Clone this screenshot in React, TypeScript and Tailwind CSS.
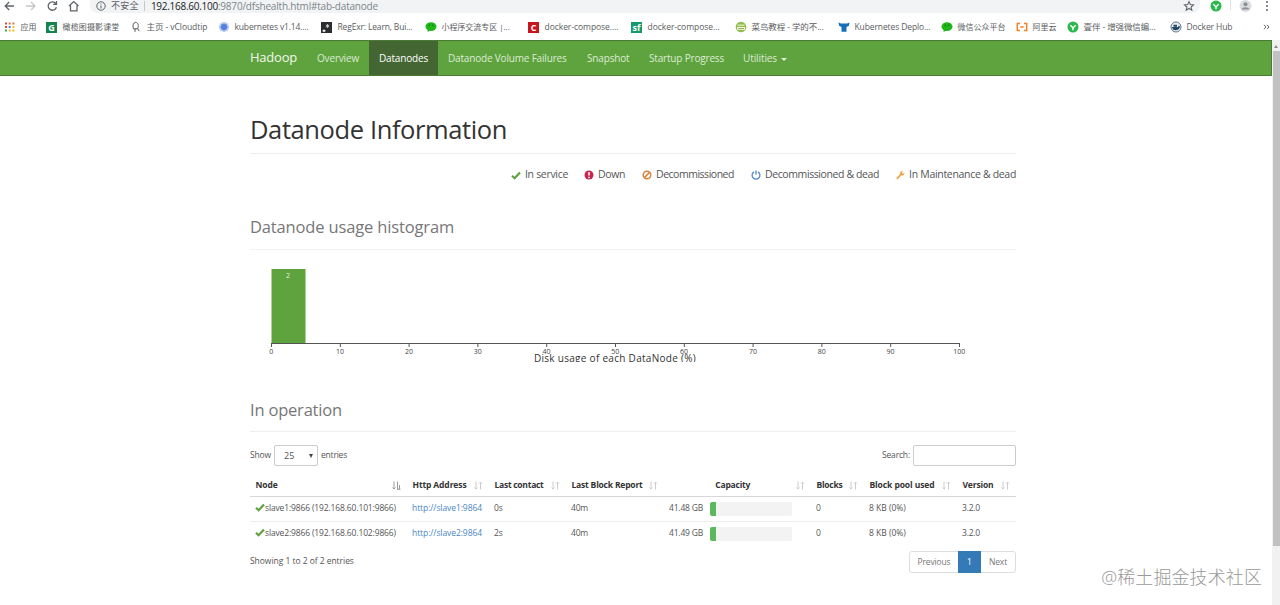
import type { ReactNode } from 'react'
import clsx from 'clsx'

type Bookmark = { icon: ReactNode; label: string; width: string; text: string }

const WeChat = () => (
  <svg className="h-3 w-3" viewBox="0 0 12 12">
    <ellipse cx="6" cy="5.6" rx="5.5" ry="4.4" fill="#1fb61a" />
    <path d="M3 8.5 2.4 11 5.5 9.6z" fill="#1fb61a" />
    <circle cx="4.2" cy="4.2" r=".7" fill="#0b6e0b" />
    <circle cx="7.8" cy="4.2" r=".7" fill="#0b6e0b" />
  </svg>
)

const GreenBadge = () => (
  <svg className="h-3 w-3" viewBox="0 0 12 12">
    <circle cx="6" cy="6" r="5.5" fill="#2bb84f" />
    <path d="M3.4 4.2 6 7l2.6-2.8M6 7v2.2" fill="none" stroke="#fff" strokeWidth="1.5" />
  </svg>
)

const Square = ({ className, children }: { className: string; children: ReactNode }) => (
  <span className={clsx('flex h-[11px] w-[11px] items-center justify-center text-[9px] font-bold leading-none text-white', className)}>
    {children}
  </span>
)

const bookmarks: Bookmark[] = [
  {
    icon: (
      <svg className="h-3 w-3" viewBox="0 0 12 12">
        <path d="M1 1.5h2v2H1zM1 5h2v2H1z" fill="#e04a3f" />
        <path d="M4.7 1.5h2v2h-2zM8.4 1.5h2v2h-2z" fill="#e8734a" />
        <path d="M4.7 5h2v2h-2z" fill="#4a7de0" />
        <path d="M8.4 5h2v2h-2zM8.4 8.5h2v2h-2zM4.7 8.5h2v2h-2z" fill="#f0bd2c" />
        <path d="M1 8.5h2v2H1z" fill="#3fa653" />
      </svg>
    ),
    label: '应用',
    width: 'w-[42px]',
    text: 'text-[8px]',
  },
  { icon: <Square className="bg-[#14834f]">G</Square>, label: '橄榄图摄影课堂', width: 'w-[84px]', text: 'text-[8px] tracking-[0.14px]' },
  {
    icon: (
      <svg className="h-3 w-3" viewBox="0 0 12 12" fill="none" stroke="#555" strokeWidth="1">
        <path d="M3.5 7.8C2.4 5 3.2 1.6 5.6 1.3 8.2 1.4 9 5 7.6 7.8zM5 8v2.8M7.6 7.8l1.8 2.4" />
      </svg>
    ),
    label: '主页 - vCloudtip',
    width: 'w-[88px]',
    text: 'text-[8.5px] tracking-[-0.06px]',
  },
  {
    icon: (
      <svg className="h-3 w-3" viewBox="0 0 12 12">
        <circle cx="6" cy="6" r="5" fill="#bfd0f2" />
        <circle cx="6" cy="6" r="3" fill="#4c79d8" />
        <path d="M6 1.5v9M1.5 6h9M2.8 2.8l6.4 6.4M9.2 2.8 2.8 9.2" stroke="#5c86dd" strokeWidth=".7" />
      </svg>
    ),
    label: 'kubernetes v1.14....',
    width: 'w-[103px]',
    text: 'text-[8.5px] tracking-[-0.16px]',
  },
  {
    icon: (
      <svg className="h-[11px] w-[11px]" viewBox="0 0 11 11">
        <path d="M0 0h11v11H0z" fill="#2c2d31" />
        <path d="M2 8h2v1.5H2zM6.5 2v4M4.8 3l3.4 2M8.2 3 4.8 5" fill="#fff" stroke="#ddd" strokeWidth=".8" />
      </svg>
    ),
    label: 'RegExr: Learn, Bui...',
    width: 'w-[104px]',
    text: 'text-[8.5px] tracking-[-0.16px]',
  },
  { icon: <WeChat />, label: '小程序交流专区 |...', width: 'w-[103px]', text: 'text-[8px] tracking-[-0.05px]' },
  { icon: <Square className="bg-[#c8161d]">C</Square>, label: 'docker-compose....', width: 'w-[103px]', text: 'text-[8.5px] tracking-[-0.05px]' },
  { icon: <Square className="bg-[#159a68]">sf</Square>, label: 'docker-compose...', width: 'w-[104px]', text: 'text-[8.5px] tracking-[-0.04px]' },
  {
    icon: (
      <svg className="h-3 w-3" viewBox="0 0 12 12">
        <circle cx="6" cy="6" r="5.3" fill="#8fbd4e" />
        <path d="M2 6h8v2.8H2z" fill="#f2f6dc" />
        <path d="M2.5 4.2h7" stroke="#e5efc4" strokeWidth="1.2" />
        <path d="M3 7.5h6" stroke="#8a9b60" strokeWidth=".8" />
      </svg>
    ),
    label: '菜鸟教程 - 学的不...',
    width: 'w-[103px]',
    text: 'text-[8.5px] tracking-[-0.1px]',
  },
  {
    icon: (
      <svg className="h-3 w-3" viewBox="0 0 12 12">
        <path d="M.5 1.5 3 2.6h6l2.5-1.1-.6 3.2L8.5 6v4.8h-5V6L1.1 4.7z" fill="#1670b8" />
      </svg>
    ),
    label: 'Kubernetes Deplo...',
    width: 'w-[103px]',
    text: 'text-[8.5px] tracking-[-0.11px]',
  },
  { icon: <WeChat />, label: '微信公众平台', width: 'w-[75px]', text: 'text-[8px]' },
  {
    icon: (
      <svg className="h-3 w-3" viewBox="0 0 12 12" fill="none" stroke="#f5802a" strokeWidth="1.5">
        <path d="M4 2.5H1.3v7H4M8 2.5h2.7v7H8M4.3 6h3.4" />
      </svg>
    ),
    label: '阿里云',
    width: 'w-[51px]',
    text: 'text-[8px]',
  },
  { icon: <GreenBadge />, label: '壹伴 - 增强微信编...', width: 'w-[103px]', text: 'text-[8.5px] tracking-[-0.1px]' },
  {
    icon: (
      <svg className="h-3 w-3" viewBox="0 0 12 12">
        <circle cx="6" cy="6" r="5" fill="#e8f0f5" stroke="#5b7286" strokeWidth="1" />
        <path d="M2 6h6.2l.5-1.6 1.3 1.2C9.500 8.500 7.500 9.300 5.500 9.300 3.500 9.300 2.300 8 2 6zM3.500 3.800h3.500v2H3.500z" fill="#23455f" />
      </svg>
    ),
    label: 'Docker Hub',
    width: 'w-[94px]',
    text: 'text-[8.5px] tracking-[-0.1px]',
  },
]

function BrowserBar() {
  return (
    <>
      <div className="flex h-[14px] items-start overflow-hidden text-[#5f6368]">
        <svg className="h-[13px] w-[90px] shrink-0" viewBox="0 0 90 13" fill="none" stroke="#5f6368" strokeWidth="1.3">
          <path d="M14 6H5.500M9.200 2 5.200 6l4 4" />
          <path d="M26 6h8.500M31 2l4 4-4 4" stroke="#c4c6c9" />
          <path d="M55.800 3.600A4.200 4.200 0 1 0 56.400 7.200M56.500 1v3.300h-3.300" />
          <path d="M69 6 73.700 1.600 78.500 6M70.500 5.500v5.300h6.500V5.500" />
        </svg>
        <div className="flex h-[13px] w-[1110px] items-start rounded-b-lg bg-[#f1f3f4] pl-[6px]">
          <svg className="mt-px h-[11px] w-[11px]" viewBox="0 0 11 11" fill="none" stroke="#5f6368">
            <circle cx="5" cy="5" r="4.200" />
            <path d="M5 4.500v3M5 2.500v1" />
          </svg>
          <span className="ml-1 text-[9px] leading-[12px] tracking-[0.3px]">不安全</span>
          <span className="mt-px ml-[5px] h-[10px] w-px bg-[#c6c8cb]" />
          <span className="ml-[6px] text-[10px] leading-[12px] tracking-[-0.27px] text-[#202124]">192.168.60.100</span>
          <span className="text-[10px] leading-[12px] tracking-[-0.2px] text-[#80868b]">:9870/dfshealth.html#tab-datanode</span>
          <svg className="mr-[5px] ml-auto h-[12px] w-[12px]" viewBox="0 0 12 12" fill="none" stroke="#5f6368" strokeWidth="1.100">
            <path d="m6 1.600 1.300 3 3.200.3-2.400 2.100.7 3.200L6 8.500l-2.800 1.700.7-3.200-2.400-2.100 3.200-.3z" />
          </svg>
        </div>
        <div className="flex flex-1 items-start pl-[10px]">
          <GreenBadge />
          <span className="ml-[8px] h-[10px] w-px bg-[#e0e2e4]" />
          <svg className="ml-[8px] h-[13px] w-[13px]" viewBox="0 0 13 13">
            <circle cx="6.500" cy="6" r="6" fill="#dadce0" />
            <circle cx="6.500" cy="4.200" r="2" fill="#8b8f94" />
            <path d="M2.800 9.500c0-3 7.400-3 7.400 0z" fill="#8b8f94" />
          </svg>
          <svg className="ml-[13px] h-[12px] w-[4px]" viewBox="0 0 4 12" fill="#5f6368">
            <circle cx="2" cy="2" r="1" />
            <circle cx="2" cy="6" r="1" />
            <circle cx="2" cy="10" r="1" />
          </svg>
        </div>
      </div>
      <div className="flex h-[26px] items-center pl-[4px]">
        {bookmarks.map((b, i) => (
          <div key={i} className={clsx('flex shrink-0 items-center whitespace-nowrap text-[#5a5d61]', b.width)}>
            <span className="w-[16.500px] shrink-0">{b.icon}</span>
            <span className={b.text}>{b.label}</span>
          </div>
        ))}
        <svg className="-ml-px h-[6px] w-[7px]" viewBox="0 0 7 6" fill="none" stroke="#5f6368">
          <path d="m1 .8 2 2.200-2 2.200M4 .8l2 2.200-2 2.200" />
        </svg>
      </div>
    </>
  )
}

const tabs = [
  { label: 'Overview', width: 'w-[62px]', text: 'tracking-[-0.17px]' },
  { label: 'Datanodes', width: 'w-[69px]', text: 'tracking-[-0.18px]', active: true },
  { label: 'Datanode Volume Failures', width: 'w-[139px]', text: 'tracking-[-0.18px]' },
  { label: 'Snapshot', width: 'w-[62px]', text: 'tracking-[-0.16px]' },
  { label: 'Startup Progress', width: 'w-[95px]', text: 'tracking-[-0.18px]' },
]

function Navbar() {
  return (
    <nav className="flex h-[36px] border-t border-r border-b border-[#4b7a35] bg-[#5fa33e] pl-[250px] text-[10px] text-[#dcebd4]">
      <a className="flex w-[57px] items-center text-[13px] tracking-[-0.23px] text-[#f1f8ed]">Hadoop</a>
      {tabs.map((t) => (
        <a key={t.label} className={clsx('flex items-center pl-[10px] whitespace-nowrap', t.width, t.text, t.active && 'bg-[#446633] text-white')}>
          {t.label}
        </a>
      ))}
      <a className="flex items-center gap-1 pl-[9px] tracking-[-0.1px]">
        Utilities
        <span className="mt-0.5 border-x-[3px] border-t-[3px] border-x-transparent border-t-[#e6f1e0]" />
      </a>
    </nav>
  )
}

const Check = ({ className }: { className?: string }) => (
  <svg className={clsx('h-[9px] w-[10px]', className)} viewBox="0 0 10 9">
    <path d="m1 4.800 2.600 2.500L9 1.500" fill="none" stroke="#5fa341" strokeWidth="2.200" />
  </svg>
)

const legend = [
  { icon: <Check />, label: 'In service', width: 'w-[73px]', text: 'tracking-[-0.31px]' },
  {
    icon: (
      <svg className="h-[10px] w-[10px]" viewBox="0 0 10 10">
        <circle cx="5" cy="5" r="4.500" fill="#c7254e" />
        <path d="M5 2v3.500M5 6.700v1.500" stroke="#fff" strokeWidth="1.500" />
      </svg>
    ),
    label: 'Down',
    width: 'w-[58px]',
    text: 'tracking-[-0.38px]',
  },
  {
    icon: (
      <svg className="h-[10px] w-[10px]" viewBox="0 0 10 10" fill="none" stroke="#d9843b" strokeWidth="1.500">
        <circle cx="5" cy="5" r="3.800" />
        <path d="M7.600 2.400 2.400 7.600" />
      </svg>
    ),
    label: 'Decommissioned',
    width: 'w-[109px]',
    text: 'tracking-[-0.48px]',
  },
  {
    icon: (
      <svg className="h-[10px] w-[10px]" viewBox="0 0 10 10" fill="none" stroke="#5b8fd0" strokeWidth="1.400">
        <path d="M3 1.900a3.900 3.900 0 1 0 4 0M5 .500v4" />
      </svg>
    ),
    label: 'Decommissioned & dead',
    width: 'w-[145px]',
    text: 'tracking-[-0.4px]',
  },
  {
    icon: (
      <svg className="h-[10px] w-[10px]" viewBox="0 0 10 10">
        <path d="M1.400 8.600 5.600 4.400" stroke="#f0a040" strokeWidth="1.900" strokeLinecap="round" />
        <path d="M9.300 2.400 7.600 3.500 6.500 2.400 7.700.7C5.500.3 4 2 4.700 4L6 5.300c2 .7 3.700-.8 3.300-2.900z" fill="#f0a040" />
      </svg>
    ),
    label: 'In Maintenance & dead',
    width: 'w-[120px]',
    text: 'tracking-[-0.31px]',
  },
]

const ticks = [0, 10, 20, 30, 40, 50, 60, 70, 80, 90, 100]

function Histogram() {
  return (
    <svg className="block h-[112px] w-[766px]" viewBox="0 0 766 112">
      <rect x="21.500" y="19" width="34" height="74" fill="#5fa33e" />
      <text x="38" y="28" textAnchor="middle" fontSize="7" fill="#e8f3e2">2</text>
      <path d="M21.500 93.500H709.500" stroke="#555" />
      {ticks.map((t) => (
        <g key={t}>
          <path d="M0 93v4" transform={`translate(${21.5 + t * 6.88} 0)`} stroke="#555" />
          <text x={21.3 + t * 6.88} y="103.500" textAnchor="middle" fontSize="7" fill="#444">{t}</text>
        </g>
      ))}
      <text x="365" y="112" textAnchor="middle" fontSize="10" letterSpacing="0.29" fill="#333">Disk usage of each DataNode (%)</text>
    </svg>
  )
}

const SortIcon = ({ active }: { active?: boolean }) => (
  <svg className="ml-auto h-[9px] w-[9px]" viewBox="0 0 9 9" fill="none" stroke={active ? '#999' : '#ccc'} strokeWidth="1">
    {active ? (
      <path d="M2 .500v7.500M.500 6.500 2 8l1.500-1.500M5.500.500v8M7.500 4v4.500M5 8.200h3.500" />
    ) : (
      <path d="M2 .500v7.500M.500 6.500 2 8l1.500-1.500M6.500 8.500V1M5 2.500 6.500 1 8 2.500" />
    )}
  </svg>
)

const columns = [
  { label: 'Node', text: 'tracking-[-0.14px]' },
  { label: 'Http Address', text: 'tracking-[-0.12px]' },
  { label: 'Last contact', text: 'tracking-[-0.26px]' },
  { label: 'Last Block Report', text: 'tracking-[-0.19px]' },
  { label: 'Capacity', text: 'ml-auto tracking-[-0.19px]' },
  { label: 'Blocks', text: 'tracking-[-0.24px]' },
  { label: 'Block pool used', text: 'tracking-[-0.09px]' },
  { label: 'Version', text: 'tracking-[-0.15px]' },
]

const nodes = [
  { name: 'slave1:9866 (192.168.60.101:9866)', http: 'http://slave1:9864', contact: '0s', report: '40m', capacity: '41.48 GB', blocks: 0, pool: '8 KB (0%)', version: '3.2.0' },
  { name: 'slave2:9866 (192.168.60.102:9866)', http: 'http://slave2:9864', contact: '2s', report: '40m', capacity: '41.49 GB', blocks: 0, pool: '8 KB (0%)', version: '3.2.0' },
]

const rowGrid = 'grid grid-cols-[157px_82px_77px_98px_147px_53px_93px_59px] items-center whitespace-nowrap'

function NodeTable() {
  return (
    <div className="mt-[8px]">
      <div className={clsx(rowGrid, 'h-[23px] border-b border-[#d8d8d8] font-bold text-[#333]')}>
        {columns.map((c, i) => (
          <div key={c.label} className="flex items-center pr-[6px] pl-[5.500px]">
            <span className={c.text}>{c.label}</span>
            <SortIcon active={i === 0} />
          </div>
        ))}
      </div>
      {nodes.map((n, i) => (
        <div key={n.name} className={clsx(rowGrid, 'text-[#555]', i === 0 ? 'h-[24.500px] border-b border-[#eee]' : 'h-[24.500px]')}>
          <div className="flex items-center pl-[5px] tracking-[-0.14px]">
            <Check className="mb-0.5" />
            {n.name}
          </div>
          <a className="pl-[5px] tracking-[-0.08px] text-[#4a86c4]">{n.http}</a>
          <span className="pl-[5px]">{n.contact}</span>
          <span className="pl-[5px] tracking-[-0.2px]">{n.report}</span>
          <div className="flex items-center pl-[5px]">
            <span className="tracking-[-0.19px]">{n.capacity}</span>
            <div className="ml-[7px] h-[14px] w-[82px] overflow-hidden rounded-[2px] bg-[#f3f3f3]">
              <div className="h-full w-[6px] bg-[#5cb85c]" />
            </div>
          </div>
          <span className="pl-[5px]">{n.blocks}</span>
          <span className="pl-[5px]">{n.pool}</span>
          <span className="pl-[5px] tracking-[-0.21px]">{n.version}</span>
        </div>
      ))}
    </div>
  )
}

export default function App() {
  return (
    <div className="relative flex h-[605px] w-[1280px] flex-col overflow-hidden bg-white font-['Open_Sans','Noto_Sans_CJK_SC',sans-serif]">
      <BrowserBar />
      <div className="flex min-h-0 flex-1">
        <div className="w-[1272px]">
          <Navbar />
          <main className="ml-[250px] w-[766px] text-[8.5px] text-[#555]">
            <h1 className="mt-[35px] h-[43px] border-b border-[#eee] text-[25.5px] leading-[36px] tracking-[-0.39px] text-[#333]">Datanode Information</h1>
            <div className="mt-[12px] flex h-[18px] justify-end text-[10.5px] whitespace-nowrap">
              {legend.map((l) => (
                <span key={l.label} className={clsx('flex items-center gap-[4px]', l.width, l.text)}>
                  {l.icon}
                  {l.label}
                </span>
              ))}
            </div>
            <h3 className="mt-[31px] h-[35px] border-b border-[#f3f3f3] text-[16.5px] leading-[23px] tracking-[-0.15px] text-[#777]">Datanode usage histogram</h3>
            <Histogram />
            <h3 className="mt-[36px] h-[34px] border-b border-[#eee] text-[16.5px] leading-[23px] tracking-[-0.2px] text-[#777]">In operation</h3>
            <div className="mt-[13px] flex h-[21px] items-center">
              <span className="tracking-[-0.14px]">Show</span>
              <div className="mx-[3px] flex h-[21px] w-[44px] items-center justify-between rounded-[2px] border border-[#ccc] pr-[4px] pl-[9px] text-[9px]">
                25
                <span className="border-x-[2.5px] border-t-[4px] border-x-transparent border-t-[#444]" />
              </div>
              <span className="tracking-[-0.21px]">entries</span>
              <span className="ml-auto tracking-[-0.16px]">Search:</span>
              <div className="ml-[3px] h-[21px] w-[103px] rounded-[2px] border border-[#ccc]" />
            </div>
            <NodeTable />
            <div className="mt-[5px] flex h-[22px]">
              <span className="mt-[4px] tracking-[-0.04px]">Showing 1 to 2 of 2 entries</span>
              <div className="ml-auto flex rounded-[3px] border border-[#ddd] text-[#777]">
                <span className="flex w-[48px] items-center justify-center tracking-[-0.14px]">Previous</span>
                <span className="-my-px flex w-[23px] items-center justify-center bg-[#337ab7] text-white">1</span>
                <span className="flex w-[34px] items-center justify-center tracking-[-0.16px]">Next</span>
              </div>
            </div>
          </main>
        </div>
        <div className="flex w-[8px] flex-col items-center bg-[#f1f1f1] pt-[5px]">
          <span className="border-x-[2px] border-b-[3px] border-x-transparent border-b-[#888]" />
          <span className="mt-[3px] h-[495px] w-[7px] bg-[#c1c1c1]" />
        </div>
      </div>
      <div className="absolute right-[18px] bottom-[15px] text-[18px] leading-[26px] font-light tracking-[0.1px] text-[#999]">@稀土掘金技术社区</div>
    </div>
  )
}
